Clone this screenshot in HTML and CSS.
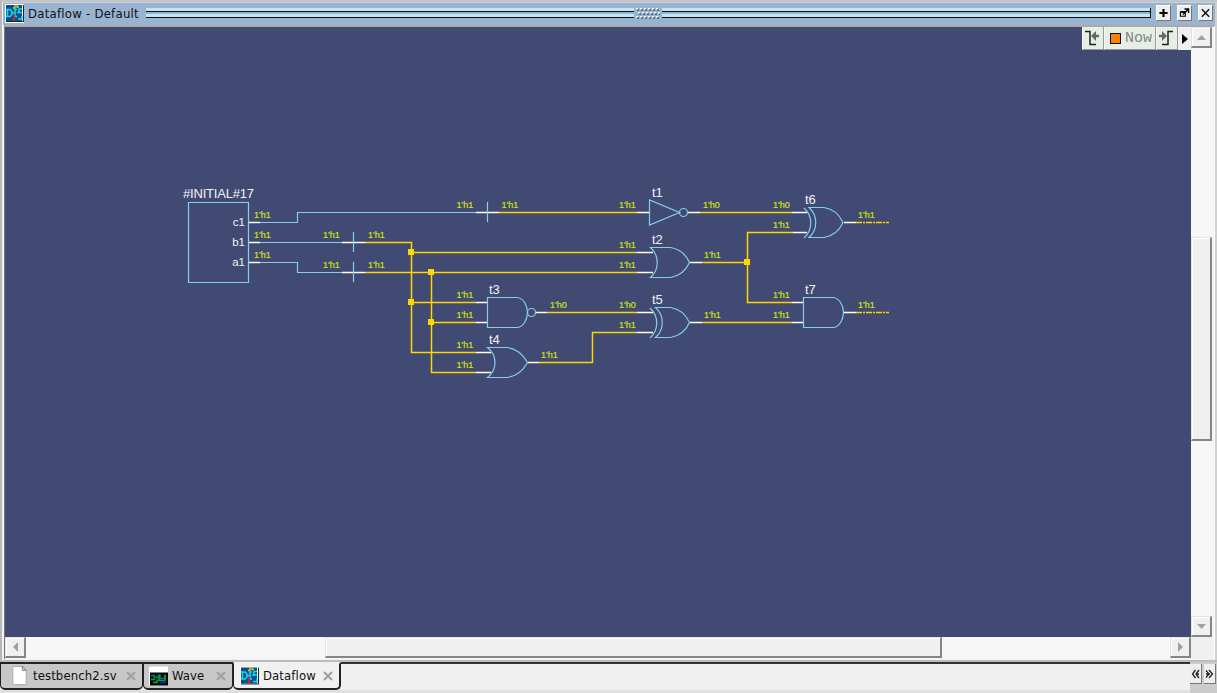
FILE: index.html
```html
<!DOCTYPE html>
<html lang="en">
<head>
<meta charset="utf-8">
<title>Dataflow - Default</title>
<link rel="stylesheet" href="styles.css">
</head>
<body>
<svg class="defs" width="0" height="0" aria-hidden="true">
  <symbol id="dataflow" viewBox="0 0 19 19">
    <path fill="#fff" d="M0 0h19v19H0z"/><path fill="#222" d="M1 18h18V1h-1v16H1z"/>
    <path fill="#07508c" d="M1 1h16v16H1z"/>
    <path d="M1 5.500h4l2 2v3l-2 2H1M2.500 5v8M7 9h3M10 5v8M10 5.500h2M10 12.500h2M12 8.500h5M14 8v-3h3M13 15h4v-3" fill="none" stroke="#10dcf0" stroke-width="1.500"/>
    <path d="M8 4h2V1M12 1v2h2" fill="none" stroke="#d8d820" stroke-width="1.300"/><path d="M9 12v5M8 11.500h2" fill="none" stroke="#d02030" stroke-width="2"/>
  </symbol>
  <symbol id="x" viewBox="0 0 10 10"><path d="M1 1l8 8M9 1L1 9" fill="none" stroke="currentColor" stroke-width="2.4"/></symbol>
</svg>
<div class="window">
  <header class="title">
    <svg class="icon"><use href="#dataflow"/></svg>
    <span class="caption">Dataflow - Default</span>
    <span class="grip"></span>
    <svg class="dots" width="26" height="12">
      <defs><pattern id="dp" width="4" height="4" patternUnits="userSpaceOnUse"><path fill="#f4faff" d="M0 0h2v1.500H0z"/><path fill="#3f4d5c" d="M1 1.500h2v1.200H1z"/></pattern></defs>
      <path fill="url(#dp)" d="M0 0h23v3H0z" transform="translate(1 1)"/><path fill="url(#dp)" d="M0 0h22v3H0z" transform="translate(3 5)"/><path fill="url(#dp)" d="M0 0h23v3H0z" transform="translate(1 9)"/>
    </svg>
    <span class="grip last"></span>
    <span class="buttons">
      <svg viewBox="0 0 16 16"><path d="M8 3v10M3 8h10" fill="none" stroke="#000" stroke-width="2.6"/></svg>
      <svg viewBox="0 0 16 16"><path d="M3 7h6v5H3z" fill="none" stroke="#000" stroke-width="1.4"/><path d="M3 6.5h6" stroke="#000" stroke-width="2"/><path d="M6 10l6-6M8 3h5v5" fill="none" stroke="#000" stroke-width="1.7"/></svg>
      <svg viewBox="0 0 16 16"><path d="M3.500 3.500l9 9M12.500 3.500l-9 9" fill="none" stroke="#111" stroke-width="1.8"/></svg>
    </span>
  </header>
  <main class="view">
    <div class="canvas">
      <svg class="schematic" width="1186" height="610" viewBox="5 27 1186 610">
        <g class="wire blue">
          <path d="M188.5 202.5h60v80h-60zM260 222.5h37.5v-10H476M260 242.5h82M260 262.5h37.5v10H342"/>
        </g>
        <g class="wire gold">
          <path d="M365 242.5h46.5v110H476M365 272.5H637M431.5 272v100.5H476M411 252.5H637M411 302.5h65M431 322.5h45M499 212.5h138M547 312.5h90M539 362.5h53.5v-30H637M700 212.5h92M702 262.5h45.5M793 232.5h-45.5v70H792M702 322.5h90"/>
          <path d="M856 222.5h33M856 312.5h33" stroke-dasharray="6 1 2 1"/>
        </g>
        <path class="node" d="M408 249h6v6h-6zM428 269h6v6h-6zM408 299h6v6h-6zM428 319h6v6h-6zM744 259h6v6h-6z"/>
        <g class="wire white">
          <path d="M249 222.5h11M249 242.5h11M249 262.5h11M342 242.5h23M342 272.5h23M476 212.5h23M637 212.5h12M688 212.5h12M792 212.5h15M793 232.5h14M637 252.5h16M637 272.5h16M690 262.5h12M476 302.5h11M476 322.5h11M535 312.5h12M476 352.5h15M476 372.5h15M528 362.5h11M637 312.5h16M637 332.5h16M690 322.5h12M792 302.5h11M792 322.5h11M844 222.5h12M844 312.5h12"/>
        </g>
        <g class="wire blue">
          <path d="M353.5 232v20M353.5 262v20M487.5 202v20"/>
          <path d="M649.5 200v25l30-12.500zM487.500 297.500h30c6 1 10 8 10 15s-4 14-10 15h-30zM803.500 297.500h30c6 1 10 8 10 15s-4 14-10 15h-30z"/>
          <circle cx="683.500" cy="212.500" r="4"/><circle cx="531.500" cy="312.500" r="4"/>
          <path d="M487.500 347.500h20q13 2 20 15-7 13-20 15h-20c10-8 10-22 0-30zM650.500 247.500h20q13 2 19 15-6 13-19 15h-20c9-8 9-22 0-30z"/>
          <path d="M655.500 307.500h15q13 2 19 15-6 13-19 15h-15c9-8 9-22 0-30zM650 308c9 8 9 22 0 30M809 207.500h15q13 2 19 15-6 13-19 15h-15c9-8 9-22 0-30zM804 208c9 8 9 22 0 30"/>
        </g>
        <g class="value">
          <text x="254" y="218">1'h1</text><text x="254" y="238">1'h1</text><text x="254" y="258">1'h1</text>
          <text x="323" y="238">1'h1</text><text x="368" y="238">1'h1</text><text x="323" y="268">1'h1</text><text x="368" y="268">1'h1</text>
          <text x="456.500" y="208">1'h1</text><text x="501.500" y="208">1'h1</text><text x="619" y="208">1'h1</text>
          <text x="619" y="248">1'h1</text><text x="619" y="268">1'h1</text>
          <text x="456.500" y="298">1'h1</text><text x="456.500" y="318">1'h1</text><text x="456.500" y="348">1'h1</text><text x="456.500" y="368">1'h1</text>
          <text x="550" y="308">1'h0</text><text x="541" y="358">1'h1</text><text x="619" y="308">1'h0</text><text x="619" y="328">1'h1</text>
          <text x="703" y="208">1'h0</text><text x="773" y="208">1'h0</text><text x="773" y="228">1'h1</text>
          <text x="704" y="258">1'h1</text><text x="704" y="318">1'h1</text><text x="773" y="298">1'h1</text><text x="773" y="318">1'h1</text>
          <text x="858" y="218">1'h1</text><text x="858" y="308">1'h1</text>
        </g>
        <g class="name">
          <text x="183" y="198" textLength="71">#INITIAL#17</text>
          <text x="652" y="197">t1</text><text x="652" y="244">t2</text><text x="489" y="294">t3</text><text x="489" y="344">t4</text><text x="652" y="304">t5</text><text x="805" y="204">t6</text><text x="805" y="294">t7</text>
        </g>
        <g class="port"><text x="245" y="226">c1</text><text x="245" y="246">b1</text><text x="245" y="266">a1</text></g>
      </svg>
      <div class="timebar">
        <span class="step"><svg width="20" height="22"><path d="M2 4.500h5v13h6" fill="none" stroke="#222" stroke-width="1.500"/><path d="M16 9h-4" fill="none" stroke="#666" stroke-width="2.500"/><path d="M13 4v10L8 9z" fill="#666"/></svg></span>
        <span class="now"><i></i>Now</span>
        <span class="step"><svg width="20" height="22"><path d="M5 17.500h6v-13h5" fill="none" stroke="#222" stroke-width="1.500"/><path d="M2 9h4" fill="none" stroke="#666" stroke-width="2.500"/><path d="M5 4v10l5-5z" fill="#666"/></svg></span>
        <span class="more"></span>
      </div>
    </div>
    <div class="vscroll">
      <span class="arrow"><svg width="9" height="5"><path fill="#a0a0a0" d="M4.500 0L9 5H0z"/></svg></span>
      <span class="thumb"></span>
      <span class="arrow"><svg width="9" height="5"><path fill="#a0a0a0" d="M0 0h9L4.500 5z"/></svg></span>
    </div>
    <div class="hscroll">
      <span class="arrow"><svg width="5" height="10"><path fill="#a0a0a0" d="M5 0v10L0 5z"/></svg></span>
      <span class="thumb"></span>
      <span class="arrow"><svg width="5" height="10"><path fill="#a0a0a0" d="M0 0v10l5-5z"/></svg></span>
    </div>
    <div class="corner"></div>
  </main>
</div>
<footer class="tabs">
  <div class="tab file"><svg class="icon" viewBox="0 0 19 21"><path d="M2.500.500h10l4 4v15h-14z" fill="#fff" stroke="#aaa"/><path d="M12.500.500v4h4z" fill="#ddd" stroke="#777"/></svg><span>testbench2.sv</span><svg class="close"><use href="#x"/></svg></div>
  <div class="tab wave"><svg class="icon" viewBox="0 0 19 19"><path fill="#fff" d="M0 0h19v19H0z"/><path fill="#080808" d="M1 6h18v13H1z"/><path d="M2 9h3v2h3V9M11 8v4h5V9" fill="none" stroke="#087878" stroke-width="1.700"/><path d="M2 13h4M4 16h4v-3M10 8v6h6V8" fill="none" stroke="#10a040" stroke-width="1.500"/><path d="M11 16h6" stroke="#282090" stroke-width="2"/></svg><span>Wave</span><svg class="close"><use href="#x"/></svg></div>
  <div class="tab active"><svg class="icon"><use href="#dataflow"/></svg><span>Dataflow</span><svg class="close"><use href="#x"/></svg></div>
  <div class="rest"></div>
  <div class="nav">
    <span><svg width="9" height="10"><path d="M4.500 1L1.500 5l3 4M8 1L5 5l3 4M5 5h3" fill="none" stroke="#222" stroke-width="1.300"/></svg></span>
    <span><svg width="9" height="10"><path d="M4 1l3.500 4L4 9M1 1.500L4 5 1 8.500M1 5h4" fill="none" stroke="#222" stroke-width="1.300"/></svg></span>
  </div>
</footer>
</body>
</html>
```
FILE: styles.css
```css
* { box-sizing: border-box; }
svg { display: block; flex: none; }
body {
  margin: 0; width: 1217px; height: 693px; overflow: hidden;
  display: flex; flex-direction: column; background: #f0f0f0;
  font: 13px "DejaVu Sans Condensed", "DejaVu Sans", sans-serif; color: #111;
}
.defs { position: absolute; }
.window {
  flex: none; height: 662px; padding: 0 0 0 3px; display: flex; flex-direction: column;
  background: #f2f2f2; border-top: 2px solid #c4c4c4;
  border-bottom: 2px solid #bcbcbc;
  box-shadow: inset 2px 0 #b8b8b8, inset -2px 0 #d0d0d0;
}
.title {
  flex: none; width: 1212px; height: 23px; display: flex; align-items: center;
  background: #99b4d1; border-top: 1px solid #c3d3e5; padding: 0 2px 2px 2px;
}
.title .icon { width: 19px; height: 19px; }
.caption { width: 112px; margin: 0 6px 0 4px; font-size: 13px; letter-spacing: .25px; white-space: nowrap; }
.grip {
  flex: 1; height: 10px;
  background: linear-gradient(#c0e6f0 0 3px, #111 3px 4px, #99b4d1 4px 6px, #c0e6f0 6px 9px, #111 9px);
}
.last { border-right: 1px solid #111; }
.dots { margin: 0 1px; }
.buttons { display: flex; gap: 6px; margin-left: 5px; margin-top: -1px; }
.buttons svg { width: 15px; height: 16px; background: #eee; border-right: 1px solid #777; border-bottom: 1px solid #777; border-top: 1px solid #fff; border-left: 1px solid #fff; }
.view {
  width: 1211px; height: 634px; margin-left: 1px; display: grid;
  grid-template-columns: 1186px 22px; grid-template-rows: 610px 22px;
  border-left: 1px solid #777; border-top: 2px solid #aaa;
  border-right: 1px solid #fff;
}
.canvas { position: relative; background: #404a73; overflow: hidden; }
.wire { fill: none; stroke-width: 1.2; }
.blue { stroke: #87ceeb; }
.gold { stroke: #ffd700; stroke-width: 1.5; }
.white { stroke: #fff; stroke-width: 1.4; }
.node { fill: #ffd700; }
.schematic text { font-family: "Liberation Sans", Arial, sans-serif; }
.value { font-size: 9px; fill: #d2e010; stroke: #d2e010; stroke-width: .2; }
.name { font-size: 13px; fill: #f2f2f6; }
.port { font-size: 11.5px; fill: #f2f2f6; text-anchor: end; }
.timebar {
  position: absolute; right: 0; top: 0; width: 109px; height: 23px;
  display: grid; grid-template-columns: 22px 52px 22px 13px; background: #f0f0f0;
}
.step, .now { background: #e5efe5; border-right: 1px solid #999; border-bottom: 1px solid #999; border-left: 1px solid #f8f8f8; }
.now { display: flex; align-items: center; gap: 4px; padding-left: 5px; color: #858585; font: 15px "Liberation Mono", monospace; }
.now i { width: 11px; height: 11px; border: 1px solid #111; background: #ff8000; }
.more { align-self: center; margin-left: 4px; width: 0; border: 5px solid transparent; border-left: 6px solid #000; border-right: 0; }
.vscroll, .hscroll { display: flex; justify-content: space-between; background: repeating-conic-gradient(#fafafa 0 25%, #f3f3f3 0 50%) 0 0 / 2px 2px; }
.vscroll { flex-direction: column; }
.arrow, .thumb { background: #f0f0f0; border: 1px solid #e3e3e3; border-right: 2px solid #858585; border-bottom: 2px solid #858585; box-shadow: inset 1px 1px #fff; }
.arrow { width: 21px; height: 21px; display: grid; place-items: center; }
.vscroll .thumb { width: 21px; height: 204px; margin: 188px 0 174px; }
.hscroll .thumb { width: 617px; height: 21px; margin: 0 228px 0 299px; }
.corner { background: #f0f0f0; }
.tabs { height: 31px; display: flex; background: linear-gradient(#f0f0f0 0 28px, #e0e0e0 28px); }
.tab {
  height: 28px; display: flex; align-items: center; padding: 0 6px 1px 9px;
  background: #c8c8c8; border: 1px solid #222; border-top-width: 2px; border-bottom-width: 2px; border-radius: 0 0 5px 5px;
}
.file { width: 143px; }
.wave { width: 90px; padding-left: 5px; }
.active { width: 108px; padding-left: 6px; background: #f0f0f0; border-top-color: #f0f0f0; border-right-width: 2px; }
.tab .icon { width: 19px; height: 20px; margin-right: 4px; }
.tab span { white-space: nowrap; letter-spacing: .1px; }
.tab .close { width: 10px; height: 10px; margin-left: auto; color: #a3a3a3; }
.rest { flex: 1; border-top: 2px solid #333; }
.nav { width: 27px; display: flex; gap: 2px; padding-top: 2px; background: #ccc; }
.nav span { width: 12px; height: 20px; background: #eee; display: grid; place-items: center; border-right: 1px solid #777; border-bottom: 1px solid #777; }
```
